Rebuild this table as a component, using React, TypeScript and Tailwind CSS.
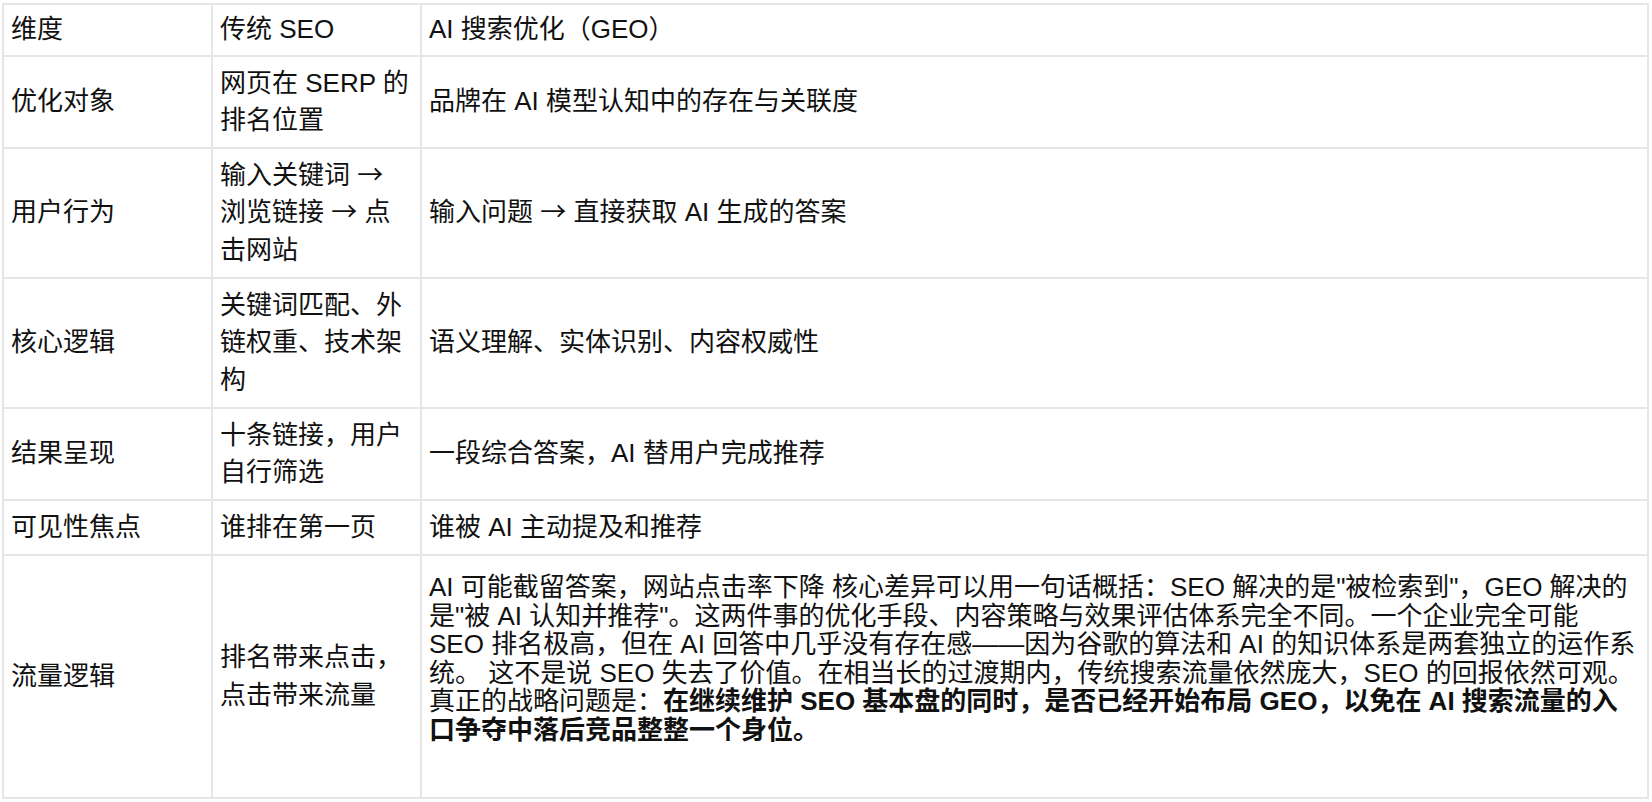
const Arrow = () => (
  <span className="leading-none" style={{ fontFamily: '"Noto Sans CJK SC", sans-serif' }}>
    →
  </span>
);

const rows: { dim: string; h: string; seo: React.ReactNode[]; geo: React.ReactNode }[] = [
  { dim: '优化对象', h: 'h-[92px]', seo: ['网页在 SERP 的', '排名位置'], geo: '品牌在 AI 模型认知中的存在与关联度' },
  {
    dim: '用户行为',
    h: 'h-[130px]',
    seo: [
      <>输入关键词 <Arrow /></>,
      <>浏览链接 <Arrow /> 点</>,
      '击网站',
    ],
    geo: <>输入问题 <Arrow /> 直接获取 AI 生成的答案</>,
  },
  { dim: '核心逻辑', h: 'h-[130px]', seo: ['关键词匹配、外', '链权重、技术架', '构'], geo: '语义理解、实体识别、内容权威性' },
  { dim: '结果呈现', h: 'h-[92px]', seo: ['十条链接，用户', '自行筛选'], geo: '一段综合答案，AI 替用户完成推荐' },
  { dim: '可见性焦点', h: 'h-[55px]', seo: ['谁排在第一页'], geo: '谁被 AI 主动提及和推荐' },
];

const cell = 'border-2 border-[#e6e6e6] px-[7px] py-0 align-middle';

export default function App() {
  return (
    <div
      className="min-h-screen bg-white pl-[2px] pt-[3px] text-[26px] leading-[37.5px] text-[#111]"
      style={{ fontFamily: '"Liberation Sans", "Noto Sans CJK SC", sans-serif' }}
    >
      <table className="w-[1647px] table-fixed border-collapse border-2 border-[#dadada]">
        <colgroup>
          <col className="w-[209px]" />
          <col className="w-[209px]" />
          <col />
        </colgroup>
        <tbody>
          <tr className="h-[52px]">
            <td className={cell}>维度</td>
            <td className={cell}>传统 SEO</td>
            <td className={cell}>AI 搜索优化（GEO）</td>
          </tr>
          {rows.map((r) => (
            <tr key={r.dim} className={r.h}>
              <td className={cell}>{r.dim}</td>
              <td className={cell}>
                {r.seo.map((line, i) => (
                  <div key={i}>{line}</div>
                ))}
              </td>
              <td className={cell}>{r.geo}</td>
            </tr>
          ))}
          <tr className="h-[243px]">
            <td className={cell}>流量逻辑</td>
            <td className={cell}>
              <div>排名带来点击，</div>
              <div>点击带来流量</div>
            </td>
            <td className="whitespace-nowrap border-2 border-[#e6e6e6] px-[7px] pb-0 pt-[17px] align-top leading-[28.5px]">
              AI 可能截留答案，网站点击率下降 核心差异可以用一句话概括：SEO 解决的是"被检索到"，GEO 解决的
              <br />
              是"被 AI 认知并推荐"。这两件事的优化手段、内容策略与效果评估体系完全不同。一个企业完全可能
              <br />
              SEO 排名极高，但在 AI 回答中几乎没有存在感——因为谷歌的算法和 AI 的知识体系是两套独立的运作系
              <br />
              统。 这不是说 SEO 失去了价值。在相当长的过渡期内，传统搜索流量依然庞大，SEO 的回报依然可观。
              <br />
              真正的战略问题是：
              <strong className="font-bold">
                在继续维护 SEO 基本盘的同时，是否已经开始布局 GEO，以免在 AI 搜索流量的入
                <br />
                口争夺中落后竞品整整一个身位。
              </strong>
            </td>
          </tr>
        </tbody>
      </table>
    </div>
  );
}
